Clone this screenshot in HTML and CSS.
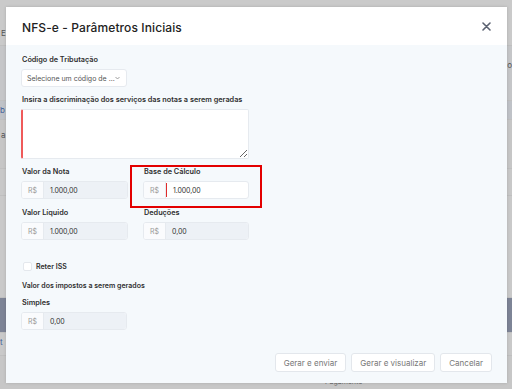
FILE: index.html
```html
<!DOCTYPE html>
<html lang="pt-BR">
<head>
    <meta charset="UTF-8">
    <meta name="viewport" content="width=device-width, initial-scale=1.0">
    <title>NFS-e - Parâmetros Iniciais</title>
    <link rel="stylesheet" href="styles.css">
</head>
<body>
    <div class="page">
        <div class="row row-top"><span class="ghost">E</span></div>
        <div class="row row-a"><span class="ghost right">o</span></div>
        <div class="row row-b"><span class="ghost link">b</span></div>
        <div class="row row-c"><span class="ghost">a</span></div>
        <div class="row row-d"></div>
        <div class="row row-e"></div>
        <div class="row row-dark"></div>
        <div class="row row-f"><span class="ghost link">t</span></div>
        <div class="row row-g"><span class="ghost pay">Pagamento</span><span class="dot"></span></div>
    </div>

    <div class="modal">
        <div class="modal-header">
            <h1>NFS-e - Parâmetros Iniciais</h1>
            <button class="close" aria-label="Fechar">
                <svg width="9" height="9" viewBox="0 0 9 9"><path d="M1 1L8 8M8 1L1 8" stroke="#5b6271" stroke-width="1.6" stroke-linecap="round"/></svg>
            </button>
        </div>

        <div class="modal-body">
            <div class="field">
                <label>Código de Tributação</label>
                <div class="select">
                    <span>Selecione um código de ...</span>
                    <svg width="5" height="4" viewBox="0 0 5 4"><path d="M0.5 1L2.5 3L4.5 1" stroke="#888" stroke-width="0.8" fill="none"/></svg>
                </div>
            </div>

            <div class="field">
                <label>Insira a discriminação dos serviços das notas a serem geradas</label>
                <textarea class="textarea"></textarea>
            </div>

            <div class="grid">
                <div class="field">
                    <label>Valor da Nota</label>
                    <div class="money disabled"><span class="prefix">R$</span><span class="value">1.000,00</span></div>
                </div>
                <div class="field highlight">
                    <label>Base de Cálculo</label>
                    <div class="money"><span class="prefix">R$</span><span class="value editing">1.000,00</span></div>
                </div>
                <div class="field">
                    <label>Valor Líquido</label>
                    <div class="money disabled"><span class="prefix">R$</span><span class="value">1.000,00</span></div>
                </div>
                <div class="field">
                    <label>Deduções</label>
                    <div class="money disabled"><span class="prefix">R$</span><span class="value">0,00</span></div>
                </div>
            </div>

            <div class="check">
                <span class="box"></span>
                <span>Reter ISS</span>
            </div>

            <p class="section">Valor dos impostos a serem gerados</p>

            <div class="field small">
                <label>Simples</label>
                <div class="money disabled"><span class="prefix">R$</span><span class="value">0,00</span></div>
            </div>
        </div>

        <div class="modal-footer">
            <button class="btn">Gerar e enviar</button>
            <button class="btn">Gerar e visualizar</button>
            <button class="btn">Cancelar</button>
        </div>
    </div>
</body>
</html>
```

FILE: styles.css
```css
body {
    margin: 0;
    font-family: Inter, "Noto Sans", sans-serif;
    background: #c9c9c9;
    color: #2b2b2b;
    overflow: hidden;
}

/* page behind the overlay */
.page {
    height: 389px;
}

.row {
    position: relative;
    border-bottom: 1px solid #bfbfbf;
}

.row-top { height: 45px; background: #cacaca; }
.row-a { height: 54px; background: #c5c6c8; }
.row-b { height: 18px; background: #bfc2c7; }
.row-c { height: 48px; background: #c6c6c6; }
.row-d { height: 26px; background: #c8c8c8; }
.row-e { height: 101px; background: #c9c9c9; }
.row-dark { height: 34px; background: #7d8496; }
.row-f { height: 22px; background: #c9c9c9; }
.row-g { height: 33px; background: #c7c7c7; border: none; }

.ghost {
    position: absolute;
    left: 1px;
    top: 28px;
    font-size: 8px;
    color: #555;
}

.row-c .ghost {
    top: 10px;
}

.ghost.right {
    left: auto;
    right: 0;
    top: 14px;
}

.ghost.link {
    color: #42609a;
    top: 4px;
    left: 0;
}

.ghost.pay {
    left: 325px;
    top: 21px;
    color: #666;
    font-size: 7px;
}

.dot {
    position: absolute;
    left: 461px;
    top: 16px;
    width: 10px;
    height: 10px;
    border-radius: 50%;
    background: #d2691e;
}

/* modal */
.modal {
    position: absolute;
    top: 7px;
    left: 6px;
    width: 501px;
    height: 376px;
    background: #f5f9fc;
    display: flex;
    flex-direction: column;
    box-shadow: 0 0 3px rgba(0, 0, 0, 0.15);
}

.modal-header {
    height: 38px;
    background: #fff;
    display: flex;
    align-items: center;
    justify-content: space-between;
    padding: 0 16px;
}

.modal-header h1 {
    margin: 0;
    padding-top: 2px;
    font-size: 12px;
    font-weight: 500;
    color: #222;
    letter-spacing: 0.1px;
}

.close {
    border: none;
    background: none;
    padding: 0;
    display: flex;
    cursor: pointer;
}

.modal-body {
    flex: 1;
    padding: 10px 15px 0;
}

.field {
    width: 228px;
    margin-bottom: 8px;
}

.field label {
    display: block;
    font-size: 7.3px;
    line-height: 10px;
    font-weight: 600;
    color: #2f2f2f;
    margin-bottom: 4px;
    padding-left: 1px;
    white-space: nowrap;
}

.select {
    width: 106px;
    height: 18px;
    box-sizing: border-box;
    background: #fff;
    border: 1px solid #e6eaef;
    border-radius: 3px;
    display: flex;
    align-items: center;
    justify-content: space-between;
    padding: 0 6px 0 5px;
    font-size: 7px;
    color: #555;
    white-space: nowrap;
    overflow: hidden;
}

.textarea {
    display: block;
    width: 228px;
    height: 50px;
    box-sizing: border-box;
    margin: 0;
    background: #fff;
    border: 1px solid #e6eaef;
    border-left: 2px solid #ef5a5a;
    border-radius: 2px;
}

.grid {
    display: grid;
    grid-template-columns: 107px 106px;
    column-gap: 15px;
    row-gap: 1px;
}

.grid .field {
    width: auto;
}

.highlight {
    position: relative;
}

.highlight::after {
    content: "";
    position: absolute;
    left: -13px;
    top: -2px;
    width: 128px;
    height: 39px;
    border: 2px solid #e30000;
}

.money {
    height: 18px;
    display: flex;
    box-sizing: border-box;
    border: 1px solid #e6eaef;
    border-radius: 3px;
    background: #fff;
    font-size: 7px;
    overflow: hidden;
}

.prefix {
    width: 21px;
    display: flex;
    align-items: center;
    justify-content: center;
    color: #999;
    border-right: 1px solid #e6eaef;
    background: #fafbfd;
}

.value {
    flex: 1;
    display: flex;
    align-items: center;
    padding-left: 6px;
    color: #333;
    letter-spacing: -0.1px;
}

.disabled .value {
    background: #edf1f6;
}

.value.editing {
    border-left: 1px solid #e02b2b;
    margin: 1px 0;
}

.check {
    display: flex;
    align-items: center;
    gap: 4px;
    margin: 12px 0 0 2px;
    font-size: 7px;
    font-weight: 600;
    color: #2f2f2f;
    height: 12px;
}

.box {
    width: 9px;
    height: 9px;
    background: #fff;
    border: 1px solid #e4e8ed;
    border-radius: 2px;
    box-sizing: border-box;
}

.section {
    margin: 9px 0 7px;
    padding-left: 1px;
    font-size: 7px;
    line-height: 10px;
    font-weight: 600;
    color: #2f2f2f;
}

.field.small {
    width: 106px;
}

.modal-footer {
    display: flex;
    justify-content: flex-end;
    gap: 5px;
    padding: 0 15px 11px;
}

.btn {
    height: 19px;
    padding: 0 8px;
    background: #fff;
    border: 1px solid #e3e7ec;
    border-radius: 3px;
    font-family: Inter, "Noto Sans", sans-serif;
    font-size: 8px;
    color: #777;
    cursor: pointer;
}
```
